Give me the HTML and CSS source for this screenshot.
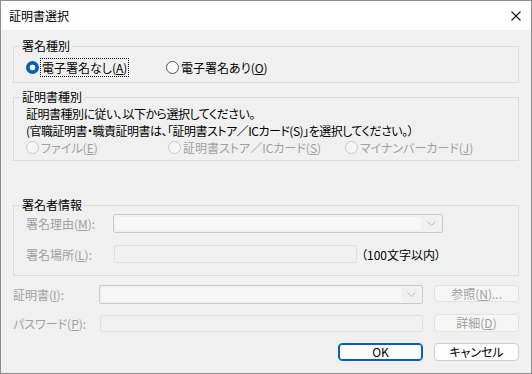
FILE: index.html
```html
<!DOCTYPE html>
<html lang="ja">
<head>
    <meta charset="UTF-8">
    <title>証明書選択</title>
    <link rel="stylesheet" href="styles.css">
</head>
<body>
    <div class="window">
        <div class="titlebar">
            <span class="title">証明書選択</span>
            <svg class="close" width="10" height="10" viewBox="0 0 10 10">
                <path d="M0.5 0.5 L9.5 9.5 M9.5 0.5 L0.5 9.5" stroke="#1a1a1a" stroke-width="1.1" fill="none"/>
            </svg>
        </div>
        <div class="content">
            <fieldset class="group group-type">
                <legend>署名種別</legend>
                <div class="radio-row">
                    <label class="radio radio-a"><span class="dot checked"></span><span class="focus">電子署名なし(<u>A</u>)</span></label>
                    <label class="radio"><span class="dot"></span><span>電子署名あり(<u>O</u>)</span></label>
                </div>
            </fieldset>

            <fieldset class="group group-cert">
                <legend>証明書種別</legend>
                <p class="note">証明書種別に従い、以下から選択してください。</p>
                <p class="note">(官職証明書・職責証明書は、「証明書ストア／ICカード(S)」を選択してください。）</p>
                <div class="radio-row disabled">
                    <label class="radio radio-file"><span class="dot"></span><span>ファイル(<u>E</u>)</span></label>
                    <label class="radio radio-store"><span class="dot"></span><span>証明書ストア／ICカード(<u>S</u>)</span></label>
                    <label class="radio"><span class="dot"></span><span>マイナンバーカード(<u>J</u>)</span></label>
                </div>
            </fieldset>

            <fieldset class="group group-signer">
                <legend>署名者情報</legend>
                <div class="field-row first">
                    <span class="label disabled">署名理由(<u>M</u>):</span>
                    <div class="combo combo-reason">
                        <span class="combo-field"></span>
                        <svg class="arrow" width="9" height="5" viewBox="0 0 9 5"><path d="M0.5 0.5 L4.5 4.5 L8.5 0.5" stroke="#b8b8b8" fill="none"/></svg>
                    </div>
                </div>
                <div class="field-row second">
                    <span class="label disabled">署名場所(<u>L</u>):</span>
                    <div class="textbox textbox-place"></div>
                    <span class="hint">（100文字以内）</span>
                </div>
            </fieldset>

            <div class="form-row cert-row">
                <span class="label label-wide disabled">証明書(<u>I</u>):</span>
                <div class="combo combo-cert">
                    <span class="combo-field"></span>
                    <svg class="arrow" width="9" height="5" viewBox="0 0 9 5"><path d="M0.5 0.5 L4.5 4.5 L8.5 0.5" stroke="#b8b8b8" fill="none"/></svg>
                </div>
                <button class="btn" disabled>参照(<u>N</u>)...</button>
            </div>
            <div class="form-row pass-row">
                <span class="label label-wide disabled">パスワード(<u>P</u>):</span>
                <div class="textbox textbox-pass"></div>
                <button class="btn" disabled>詳細(<u>D</u>)</button>
            </div>
            <div class="actions">
                <button class="btn btn-default">OK</button>
                <button class="btn btn-normal">キャンセル</button>
            </div>
        </div>
    </div>
</body>
</html>
```

FILE: styles.css
```css
* { box-sizing: border-box; }
body {
    margin: 0;
    font-family: "Noto Sans CJK JP", "Noto Sans", sans-serif;
    font-size: 12px;
    font-feature-settings: "palt";
    color: #000;
}
u { text-underline-offset: 1px; }
.window {
    width: 532px;
    height: 374px;
    border: 1px solid #8c8c8c;
    background: #f0f0f0;
    display: flex;
    flex-direction: column;
}
.titlebar {
    height: 29px;
    background: #fff;
    display: flex;
    align-items: center;
    justify-content: space-between;
    padding: 0 10px 0 8px;
}
.title {
    font-size: 12px;
    line-height: 14px;
}
.content {
    flex: 1;
    padding: 9px 12px 0;
}
.group {
    margin: 0;
    padding: 0;
    border: 1px solid #dcdcdc;
    min-width: 0;
}
.group legend {
    margin-left: 6px;
    padding: 0 2px;
    line-height: 14px;
}
.radio-row {
    display: flex;
    align-items: center;
    padding-left: 12px;
    height: 17px;
}
.group-type .radio-row {
    margin: 6px 0 6px;
}
.radio {
    display: inline-flex;
    align-items: center;
    gap: 2px;
    line-height: 17px;
}
.radio-a { width: 140px; }
.radio-file { width: 142px; }
.radio-store { width: 177px; }
.dot {
    width: 13px;
    height: 13px;
    border-radius: 50%;
    border: 1px solid #5b5b5b;
    background: #f8f8f8;
    flex: none;
}
.dot.checked {
    border: none;
    background: radial-gradient(circle, #fff 0 2.6px, #005fb8 3.2px);
}
.focus {
    outline: 1px dotted #000;
    outline-offset: 0;
    padding: 0 1px;
}
.disabled { color: #a0a0a0; }
.disabled .dot {
    border-color: #cacaca;
    background: #f6f6f6;
}
.group-cert {
    margin-top: 7px;
    padding: 1px 0 4px;
}
.note {
    margin: 0;
    padding-left: 12px;
    line-height: 17px;
    letter-spacing: -0.5px;
}
.group-signer {
    margin-top: 37px;
    padding: 2px 0 12px;
}
.field-row {
    display: flex;
    align-items: center;
    padding-left: 12px;
}
.field-row.second { margin-top: 12px; }
.label {
    width: 87px;
    flex: none;
}
.label-wide { width: 86px; }
.combo {
    height: 19px;
    border: 1px solid #cbcbcb;
    border-radius: 2px;
    background: #f0f0f0;
    display: flex;
    align-items: center;
    padding: 2px;
}
.combo-field {
    flex: 1;
    height: 100%;
    background: #f7f7f7;
}
.arrow {
    margin: 0 4px 0 6px;
}
.combo-reason { width: 330px; }
.textbox {
    height: 18px;
    border: 1px solid #e0e0e0;
    border-radius: 2px;
    background: #f0f0f0;
}
.textbox-place {
    width: 243px;
    margin-left: 1px;
}
.hint {
    margin-left: 4px;
}
.form-row {
    display: flex;
    align-items: center;
    height: 19px;
}
.cert-row { margin-top: 9px; }
.pass-row { margin-top: 10px; height: 18px; }
.combo-cert { width: 325px; }
.textbox-pass {
    width: 323px;
    height: 17px;
    margin-left: 1px;
}
.btn {
    width: 85px;
    height: 18px;
    margin-left: 11px;
    padding: 0;
    font: inherit;
    font-feature-settings: "palt";
    line-height: 16px;
    border: 1px solid #e2e2e2;
    border-radius: 4px;
    background: #f6f6f6;
    color: #a0a0a0;
}
.cert-row .btn { align-self: flex-start; height: 17px; }
.actions {
    display: flex;
    justify-content: flex-end;
    margin-top: 11px;
}
.btn-default {
    color: #000;
    background: #fdfdfd;
    border: 1px solid #005fb8;
    box-shadow: inset 0 0 0 1px #005fb8;
}
.btn-normal {
    color: #000;
    background: #fdfdfd;
    border: 1px solid #cfcfcf;
}
```
